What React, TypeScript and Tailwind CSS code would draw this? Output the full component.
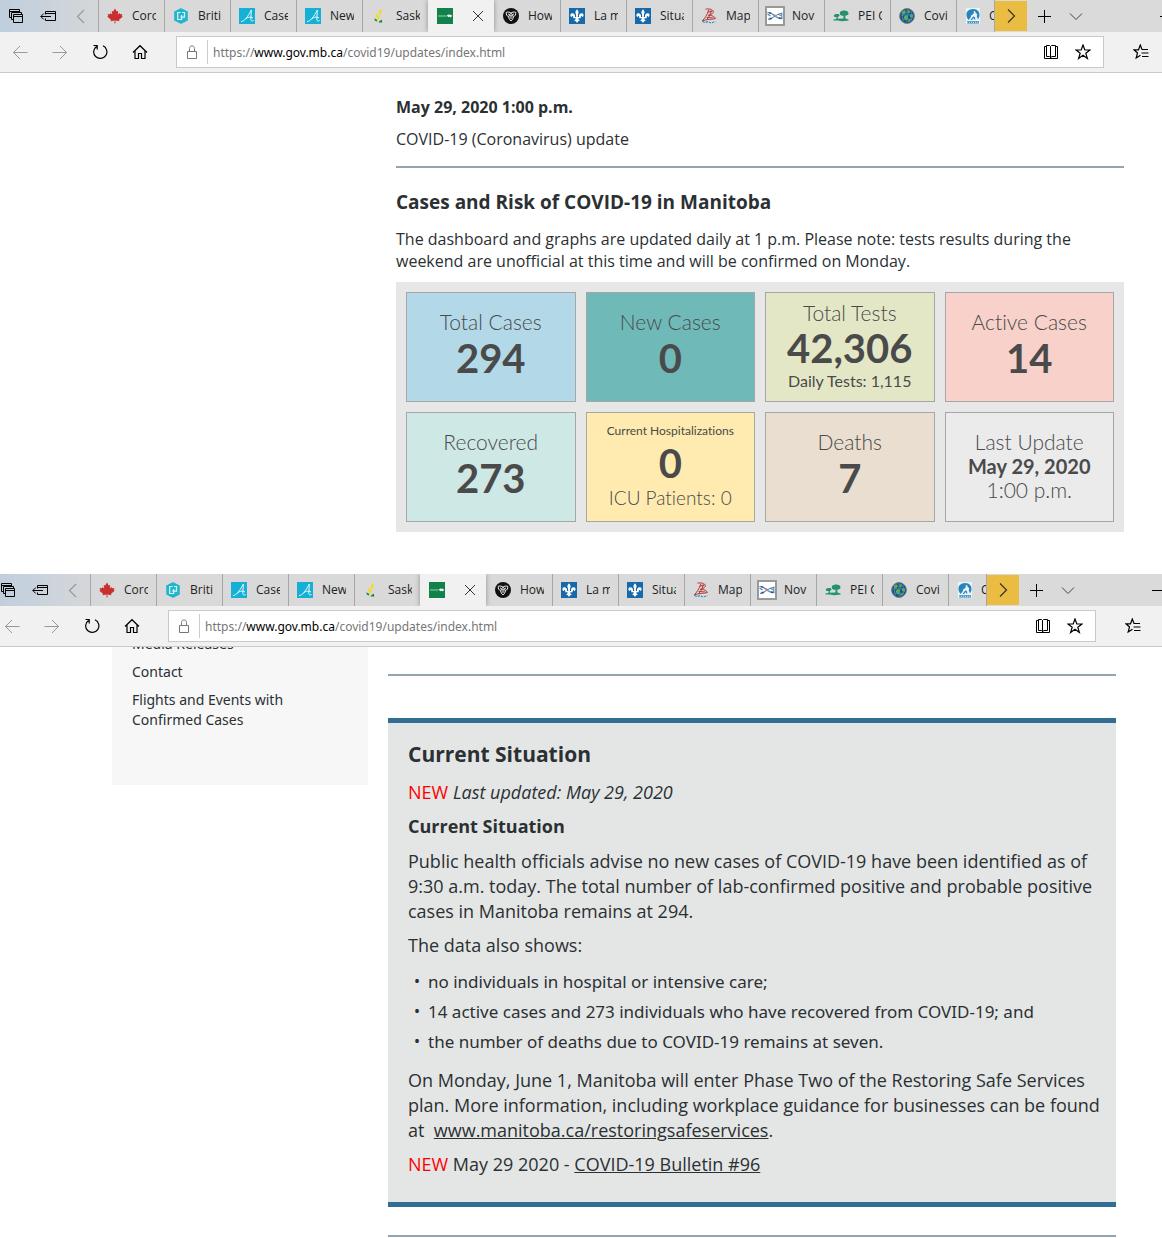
import React from "react";

type Kind = "maple" | "bc" | "ab" | "sask" | "mb" | "on" | "qc" | "nb" | "ns" | "pei" | "nl" | "yk";

function Favicon({ kind }: { kind: Kind }) {
  switch (kind) {
    case "maple":
      return (
        <svg viewBox="0 0 16 16" className="size-4 shrink-0">
          <path fill="#c8302f" d="M8 .6 9.8 3.6 11.3 2.9 10.8 6.6 12.6 5 13.1 6.2 15.4 5.9 14.7 8.1 15.7 8.8 12 11.8 12.4 13.2 8.4 12.6 8.5 15.6H7.5L7.6 12.6 3.6 13.2 4 11.8.3 8.8 1.3 8.1.6 5.9 2.9 6.2 3.4 5 5.2 6.6 4.7 2.9 6.2 3.6Z" />
        </svg>
      );
    case "bc":
      return (
        <svg viewBox="0 0 16 16" className="size-4 shrink-0">
          <path fill="#20b6cb" stroke="#20b6cb" strokeWidth="1.6" strokeLinejoin="round" d="M8 1 14 4V12L8 15 2 12V4Z" />
          <path fill="none" stroke="#d9f6f7" strokeWidth="1.2" d="M7.5 4.5H4.7V11.5H8.7V7M7.3 9.2H11.5V4.5H9" />
        </svg>
      );
    case "ab":
      return (
        <svg viewBox="0 0 16 16" className="size-4 shrink-0">
          <path fill="#16b0d6" d="M0 0H16V16H0Z" />
          <path fill="none" stroke="#e6f8fc" strokeWidth="1" d="M2 13.6C5.4 13.4 9 8.5 12.3 2L11.8 11.5C11.9 13.2 13.4 13.4 14.6 12.5M6.6 11.4C8 9 11.5 8.4 14 10" />
        </svg>
      );
    case "sask":
      return (
        <svg viewBox="0 0 16 16" className="size-4 shrink-0">
          <path fill="#f3dc22" d="M9.3 1 11.2 2.6 8.7 7.5 7.5 5ZM7.8 6.5 9 8.5 6.8 12.5 4.5 14.5ZM4.7 4.8 6.8 7.5 6.6 10.5 4.8 8Z" />
          <path fill="#198448" d="M3.6 10.3 6.3 12 5.7 13.5 3.7 12.5ZM8 13.4 10.8 11.4 11.3 14.5H7.6Z" />
        </svg>
      );
    case "mb":
      return (
        <svg viewBox="0 0 16 16" className="size-4 shrink-0">
          <path fill="#11834a" d="M0 0H16V16H0Z" />
          <path fill="#bfe3cc" d="M1 7.6H9.5V8.4H1Z" />
          <path fill="#fff" d="M9.8 7.4 11.5 6.6 14.6 7.1 14.8 8.2 13.6 9.2H13L12.6 8.5 11.4 9.2Z" />
        </svg>
      );
    case "on":
      return (
        <svg viewBox="0 0 16 16" className="size-4 shrink-0">
          <circle cx="8" cy="8" r="8" fill="#111" />
          <path fill="none" stroke="#f4f4f4" strokeWidth="1" strokeLinejoin="round" d="M3.2 4.4C5 3.7 6.7 4 8 5.2 9.3 4 11 3.7 12.8 4.4 13 6.4 12 8.2 10.2 9 10.1 10.6 9.3 12 8 13 6.7 12 5.9 10.6 5.8 9 4 8.2 3 6.4 3.2 4.4ZM5.8 9C5.8 8 6.8 6.6 8 5.2 9.2 6.6 10.2 8 10.2 9M5 5.7 8 8.2 11 5.7M8 8.2V11" />
        </svg>
      );
    case "qc":
      return (
        <svg viewBox="0 0 16 16" className="size-4 shrink-0">
          <path fill="#1669aa" d="M0 0H16V16H0Z" />
          <path fill="#fff" d="M8 1.2C9.9 3.2 10 4.7 9 6.2L8.8 9H10C9.6 6.7 11 5 13 5.2 15 5.5 15.2 8.3 13.2 9 13 7.8 11.8 7.8 11.7 9V10.3H9.3C9.4 11.8 10 12.2 11 12.4L9.2 13.2 8 15 6.8 13.2 5 12.4C6 12.2 6.6 11.8 6.7 10.3H4.3V9C4.2 7.8 3 7.8 2.8 9 .8 8.3 1 5.5 3 5.2 5 5 6.4 6.7 6 9H7.2L7 6.2C6 4.7 6.1 3.2 8 1.2Z" />
        </svg>
      );
    case "nb":
      return (
        <svg viewBox="0 0 16 16" className="size-4 shrink-0">
          <path fill="none" stroke="#b8383a" strokeWidth="1" d="M4.5 1.2C8 .4 12 1.4 12.4 3.4 12.6 5.2 10.4 6.6 7.2 7.4M7.2 7.4C10.6 7 14 8.6 14.4 10.6 11 11.6 5.6 11 1.2 13 3.6 10.6 6.4 6.6 8 1.6M10.2 2.2C9.8 6 8 9.6 5.4 11.6M6.5 4.2 11.5 3.2M5.6 9.4 12.5 10" />
          <path fill="none" stroke="#318fd0" strokeWidth="1.2" strokeDasharray="2.4 1" d="M1.5 13.4 4 14.6 7 13.6 10 15 14.5 13.6" />
        </svg>
      );
    case "ns":
      return (
        <svg viewBox="0 0 20 20" className="-mx-0.5 size-5 shrink-0">
          <path fill="#fff" stroke="#999" strokeWidth="2" d="M1 1H19V19H1Z" />
          <path fill="none" stroke="#4b82b4" strokeWidth="1.1" d="M2.5 6.5C6 6.2 8 8.5 10.5 10.5 12.5 12 15 12.6 17.5 12.6M17.5 7C14.5 7.4 12 8.6 9.5 10.4 7.5 12 5.5 13.4 3 13.4M2.5 8 5.5 10M16.8 7.5V12M13.5 8.6 16 9.6M4.5 12 7 12.6" />
          <path fill="none" stroke="#d67d54" strokeWidth="1.4" d="M8.9 8.4 11.2 10.8" />
          <path fill="none" stroke="#244f7c" strokeWidth="1.3" d="M4 6.8 6.2 7.2M4.6 13.1 6.6 12.4M14 12 16 12.5" />
        </svg>
      );
    case "pei":
      return (
        <svg viewBox="0 0 16 16" className="size-4 shrink-0">
          <path fill="#23906f" d="M6.8 5.4C6.6 3.6 8.2 2.8 9.6 2.8 11.8 1.8 15.4 2.8 15.5 5.2 15.5 7 14 7.6 12.3 7.6L12.4 10.6 15.6 11.4V12.6L9 13.2 5 12.4.5 12.6V11.4L3.4 10.9 3.6 9C1.8 9.2.6 8.4.8 7.4 1.6 6.2 4.8 5.6 6.2 6.6 7 7.8 6.2 8.8 4.8 9L4.9 10.7 10.4 10.4 10.6 7.7C8.6 8 7 7 6.8 5.4Z" />
        </svg>
      );
    case "nl":
      return (
        <svg viewBox="0 0 16 16" className="size-4 shrink-0">
          <circle cx="8" cy="8" r="7.4" fill="#1c4f74" stroke="#6b7f85" />
          <path fill="#6db03f" d="M2.5 4 5.4 2.2 7 4 5.2 6.4 3.4 6ZM8.5 2.3 11 2.6 10.4 5.2 8.7 5.5ZM6.2 7.3 9.2 8 8.5 11.7 6.4 12.4 4.7 9.6ZM11.2 6 14.2 7 13.5 10 11 8.9ZM9.7 11.4 12.1 11.2 11 13.2 9 14Z" />
          <path fill="none" stroke="#3f97cf" strokeWidth=".8" d="M1.8 7H14M3.3 11.2H13M8 1.3V14.5M4.6 2.7C2.8 7 3 10 4.7 13.5M11.7 2.8C13.5 6.5 13.4 10 11.6 13.3" />
        </svg>
      );
    default:
      return (
        <svg viewBox="0 0 16 16" className="size-4 shrink-0">
          <path fill="#e9f3f8" d="M1 0H15V16H1Z" />
          <path fill="#2785bb" d="M2 4C4 .6 10.5-.6 13.6 3.4 15.2 6.4 14.4 9.3 13 11.5L11.8 8.6 12.2 6.2 10.6 4.8 10 3 8.6 3.6 8.8 5.4 6.2 7.4 5.6 9.6 3.6 12C1.4 9.5 1 6.5 2 4ZM2 13.2H14V15.6H2ZM8.2 8.6 9.8 8.9 10.4 11.5H9.3L8.6 10 7 12H5.5Z" />
          <path stroke="#e9f3f8" strokeWidth=".8" strokeDasharray="1.2 .8" d="M2 14.4H14" />
        </svg>
      );
  }
}

const tabs: { kind: Kind; label: string }[] = [
  { kind: "maple", label: "Coronavirus" },
  { kind: "bc", label: "Briti" },
  { kind: "ab", label: "Cases" },
  { kind: "ab", label: "New" },
  { kind: "sask", label: "Saska" },
  { kind: "mb", label: "" },
  { kind: "on", label: "How" },
  { kind: "qc", label: "La mal" },
  { kind: "qc", label: "Situa" },
  { kind: "nb", label: "Map" },
  { kind: "ns", label: "Nov" },
  { kind: "pei", label: "PEI C" },
  { kind: "nl", label: "Covi" },
];

const line = { fill: "none", stroke: "currentColor", strokeWidth: 1.2 } as const;
const thin = { fill: "none", stroke: "currentColor", strokeWidth: 1 } as const;

function TabBar() {
  return (
    <div className="flex h-8 bg-linear-to-r from-[#bfcedd] via-[#d9d9d9] via-10% to-[#dadada]">
      <div className="flex w-[98px] shrink-0 items-center">
        <button aria-label="Show set-aside tabs" className="flex w-8 justify-center">
          <svg viewBox="0 0 16 16" className="size-4" {...thin}>
            <path d="M3.5 9.5H1.5V1.5H11.5V4M1.5 3.5H11.5M5.5 11.5H3.5V4.5H13.5V6.5M5.5 6.5H14.5V14.5H5.5ZM5.5 8.5H14.5" />
          </svg>
        </button>
        <button aria-label="Set tabs aside" className="flex w-8 justify-center">
          <svg viewBox="0 0 16 16" className="size-4" {...thin}>
            <path d="M5.5 6.5V3.5H15.5V12.5H5.5V10.5M5.5 5.5H15.5M11 8.5H.8M3.8 5.5.8 8.5 3.8 11.5" />
          </svg>
        </button>
        <button aria-label="Scroll tabs left" className="flex w-8 justify-center text-[#999]">
          <svg viewBox="0 0 16 16" className="size-4" {...line}>
            <path d="M12 2 5.5 8.5 12 15" />
          </svg>
        </button>
      </div>
      <div className="flex min-w-0 shrink-0">
        {tabs.map((tab, i) =>
          tab.kind === "mb" ? (
            <div key={i} className="z-10 flex w-[66px] items-center justify-between bg-[#f1f1f1] pr-2.5 pl-[9px] shadow-[0_0_5px_rgba(0,0,0,0.35)] [clip-path:inset(0_-6px)]">
              <Favicon kind={tab.kind} />
              <button aria-label="Close tab" className="text-[#333]">
                <svg viewBox="0 0 12 12" className="size-3" {...thin}>
                  <path d="M1 1 11 11M11 1 1 11" />
                </svg>
              </button>
            </div>
          ) : (
            <button key={i} className={`flex w-[66px] items-center gap-[9px] pr-2 text-left ${tab.kind === "on" ? "pl-[9px]" : "border-l border-[#a6a6a6] pl-2"}`}>
              <Favicon kind={tab.kind} />
              <span className="w-6 overflow-hidden font-['Open_Sans',sans-serif] text-xs whitespace-nowrap text-[#222]">{tab.label}</span>
            </button>
          ),
        )}
        <button className="flex w-[39px] items-center gap-2 overflow-hidden border-x border-[#a6a6a6] pl-2">
          <Favicon kind="yk" />
          <span className="font-['Open_Sans',sans-serif] text-xs text-[#222]">COVID</span>
        </button>
      </div>
      <button aria-label="Scroll tabs right" className="flex h-[30px] w-8 shrink-0 items-center justify-center self-center bg-[#ebbc42] text-[#333]">
        <svg viewBox="0 0 16 16" className="size-4" {...line}>
          <path d="M5 1.5 11.5 8 5 14.5" />
        </svg>
      </button>
      <button aria-label="New tab" className="ml-px flex w-8 shrink-0 items-center justify-center">
        <svg viewBox="0 0 14 14" className="size-3.5" {...thin}>
          <path d="M7.5 1V14M1 7.5H14" />
        </svg>
      </button>
      <button aria-label="Show tab previews" className="flex w-8 shrink-0 items-center justify-center text-[#444]">
        <svg viewBox="0 0 14 14" className="size-3.5" {...thin}>
          <path d="M1 4.5 7 10.5 13 4.5" />
        </svg>
      </button>
      <button aria-label="Minimize" className="-mr-2 ml-auto flex w-2.5 shrink-0 items-center">
        <span className="h-px w-full bg-black" />
      </button>
    </div>
  );
}

function Toolbar() {
  return (
    <div className="flex h-[41px] items-center border-b border-[#c9c9c9] bg-[#f1f1f1]">
      <div className="flex w-44 shrink-0 pl-0.5">
        <button aria-label="Back" className="flex w-9 justify-center text-[#999]">
          <svg viewBox="0 0 16 16" className="size-4" {...thin}><path d="M15.5 8.5H1M8 2 1.5 8.5 8 15" /></svg>
        </button>
        <button aria-label="Forward" className="flex w-11 justify-center text-[#999]">
          <svg viewBox="0 0 16 16" className="size-4" {...thin}><path d="M.5 8.5H15M8 2 14.5 8.5 8 15" /></svg>
        </button>
        <button aria-label="Refresh" className="flex w-9 justify-center">
          <svg viewBox="0 0 16 16" className="size-4" {...line}><path d="M11 1.8A6.6 6.6 0 1 1 4.5 2.4M1.5 1.5H5.2V5.4" /></svg>
        </button>
        <button aria-label="Home" className="flex w-11 justify-center">
          <svg viewBox="0 0 16 16" className="size-4" {...line}><path d="M1 8.5 8 1.7 15 8.5M3 7V14.5H6.5V9.5H9.5V14.5H13V7" /></svg>
        </button>
      </div>
      <div className="flex h-8 min-w-0 flex-1 items-center border border-[#c9c9c9] bg-white">
        <div className="flex h-6 w-[31px] items-center justify-center border-r border-[#ccc] text-[#777]">
          <svg viewBox="0 0 14 16" className="h-4 w-3.5" {...thin}><path d="M2.5 7.5H11.5V14.5H2.5ZM4.5 7.5V4.5C4.5 1 9.5 1 9.5 4.5V7.5" /></svg>
        </div>
        <div className="flex-1 pt-px pl-[5px] font-['Noto_Sans',sans-serif] text-xs text-[#767676]">
          https://<span className="text-black">www.gov.mb.ca</span>/covid19/updates/index.html
        </div>
        <button aria-label="Reading view" className="flex w-8 justify-center">
          <svg viewBox="0 0 16 16" className="size-4" {...thin}><path d="M3.5 1.5H6.5L7.5 2.5 8.5 1.5H12.5V12.5H9L7.5 13.5 6.5 12.5H3.5ZM7.5 2.5V14M3.5 2.5H1.5V14.5H14.5V2.5H12.5" /></svg>
        </button>
        <button aria-label="Add to favorites" className="mr-1 flex w-8 justify-center">
          <svg viewBox="0 0 16 16" className="size-4" {...line}><path d="M8 1 9.8 6H15L10.8 9.2 12.4 14.5 8 11.3 3.6 14.5 5.2 9.2 1 6H6.2Z" /></svg>
        </button>
      </div>
      <div className="flex w-[58px] shrink-0 justify-center pl-4">
        <button aria-label="Favorites hub">
          <svg viewBox="0 0 16 16" className="size-4" {...line}><path d="M15 5.5H9L7.3 1 5.5 5.8H1L4.5 9 3.2 14 7.5 11.2M8.5 9H15.5M9 12.5H15.5" /></svg>
        </button>
      </div>
    </div>
  );
}

function BrowserChrome({ scrolled = false }: { scrolled?: boolean }) {
  return (
    <header className="overflow-hidden bg-[#dadada] text-black">
      <div className={scrolled ? "-ml-2" : ""}>
        <div className={scrolled ? "bg-[#dadada] pr-2" : ""}><TabBar /></div>
        <div className={scrolled ? "bg-[linear-gradient(#f1f1f1_40px,#c9c9c9_40px)] pr-2" : ""}><Toolbar /></div>
      </div>
    </header>
  );
}

const label = "text-[21px] leading-6 font-light";
const value = "text-[40px] leading-12 font-bold";

function Tile({ color, children }: { color: string; children: React.ReactNode }) {
  return (
    <div className={`flex h-[110px] flex-col items-center justify-center border border-[#a6a6a6] pb-0.5 ${color}`}>{children}</div>
  );
}

function Dashboard() {
  return (
    <section className="mt-2.5 grid grid-cols-4 gap-2.5 bg-[#e7e7e7] p-2.5 text-center font-['Lato',sans-serif] text-[#4a4a4a] [font-variant-ligatures:none]">
      <Tile color="bg-[#b3d9e8]"><p className={label}>Total Cases</p><p className={value}>294</p></Tile>
      <Tile color="bg-[#6fbab8]"><p className={label}>New Cases</p><p className={value}>0</p></Tile>
      <Tile color="bg-[#e3e7c6]">
        <p className={label}>Total Tests</p>
        <p className="text-[40px] leading-[46px] font-bold">42,306</p>
        <p className="text-base leading-5">Daily Tests: 1,115</p>
      </Tile>
      <Tile color="bg-[#f7d1ca]"><p className={label}>Active Cases</p><p className={value}>14</p></Tile>
      <Tile color="bg-[#cee8e6]"><p className={label}>Recovered</p><p className={value}>273</p></Tile>
      <Tile color="bg-[#ffebaf]">
        <p className="text-xs leading-4">Current Hospitalizations</p>
        <p className={value}>0</p>
        <p className="text-[19px] leading-[22px] font-light">ICU Patients: 0</p>
      </Tile>
      <Tile color="bg-[#e9decf]"><p className={label}>Deaths</p><p className={value}>7</p></Tile>
      <Tile color="bg-[#ebebeb]">
        <p className={label}>Last Update</p>
        <p className="text-xl leading-6 font-bold">May 29, 2020</p>
        <p className={label}>1:00 p.m.</p>
      </Tile>
    </section>
  );
}

const bullet = "flex before:w-5 before:shrink-0 before:pl-1.5 before:text-base before:content-['•']";

export default function App() {
  return (
    <div className="bg-white font-['Open_Sans',sans-serif] text-[#2b3033]">
      <BrowserChrome />
      <main className="mr-[38px] ml-[396px] pt-[23px] pb-[42px] text-base leading-[22px]">
        <p className="font-bold">May 29, 2020 1:00 p.m.</p>
        <p className="mt-2.5">COVID-19 (Coronavirus) update</p>
        <hr className="mt-4 border-t-2 border-[#90a4b1]" />
        <h1 className="mt-5 text-[19px] leading-7 font-bold">Cases and Risk of COVID-19 in Manitoba</h1>
        <p className="mt-3">
          The dashboard and graphs are updated daily at 1 p.m. Please note: tests results during the weekend are unofficial at this time and will be confirmed on Monday.
        </p>
        <Dashboard />
      </main>

      <BrowserChrome scrolled />
      <div className="flex gap-5 pr-[46px] pl-28">
        <nav className="h-[138px] w-64 shrink-0 overflow-hidden bg-[#f7f7f7] px-5 font-['Noto_Sans','Open_Sans',sans-serif] text-sm leading-5">
          <ul className="-mt-[13px] flex flex-col gap-2">
            <li><a href="#media">Media Releases</a></li>
            <li><a href="#contact">Contact</a></li>
            <li><a href="#flights">Flights and Events with Confirmed Cases</a></li>
          </ul>
        </nav>
        <main className="min-w-0 flex-1 pt-[27px]">
          <hr className="border-t-2 border-[#90a4b1]" />
          <section className="mt-[42px] border-y-[5px] border-[#326d92] bg-[#e4e6e5] pt-4 pr-3 pb-[25px] pl-5 text-lg leading-[25px]">
            <h2 className="text-[21px] leading-[30px] font-bold">Current Situation</h2>
            <p className="mt-[11px]"><span className="text-[#ff0000]">NEW</span> <em>Last updated: May 29, 2020</em></p>
            <h3 className="mt-[9px] font-bold">Current Situation</h3>
            <p className="mt-2.5">Public health officials advise no new cases of COVID-19 have been identified as of 9:30 a.m. today. The total number of lab-confirmed positive and probable positive cases in Manitoba remains at 294.</p>
            <p className="mt-[9px]">The data also shows:</p>
            <ul className="mt-[11px] flex flex-col gap-[5px] font-['Noto_Sans','Open_Sans',sans-serif] text-[17px]">
              <li className={bullet}>no individuals in hospital or intensive care;</li>
              <li className={bullet}>14 active cases and 273 individuals who have recovered from COVID-19; and</li>
              <li className={bullet}>the number of deaths due to COVID-19 remains at seven.</li>
            </ul>
            <p className="mt-[14px]">On Monday, June 1, Manitoba will enter Phase Two of the Restoring Safe Services plan. More information, including workplace guidance for businesses can be found at &nbsp;<a className="underline" href="#restoring">www.manitoba.ca/restoringsafeservices</a>.</p>
            <p className="mt-[9px]"><span className="text-[#ff0000]">NEW</span> May 29 2020 - <a className="underline" href="#bulletin">COVID-19 Bulletin #96</a></p>
          </section>
          <hr className="mt-7 border-t-2 border-[#90a4b1]" />
        </main>
      </div>
    </div>
  );
}
